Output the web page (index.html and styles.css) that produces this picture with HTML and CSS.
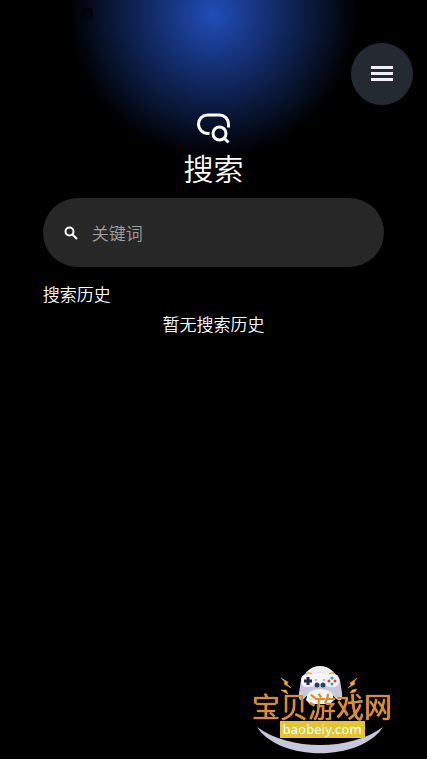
FILE: index.html
```html
<!DOCTYPE html>
<html lang="zh-CN">
<head>
  <meta charset="UTF-8" />
  <meta name="viewport" content="width=device-width, initial-scale=1.0" />
  <title>搜索</title>
  <link rel="stylesheet" href="styles.css">
</head>
<body>
<span class="lang-badge" aria-hidden="true">A</span>

<button class="menu-button" type="button" aria-label="菜单">
  <svg viewBox="0 0 24 16" width="24" height="16">
    <path d="M1 1.500h22M1 7.500h22M1 13.500h22" stroke="#f3ecfb" stroke-width="3" fill="none" />
  </svg>
</button>

<main class="container">
  <header class="heading">
    <svg class="heading-icon" viewBox="0 0 36 32" width="36" height="32" aria-hidden="true">
      <path d="M13.500 21.500h-1.500A9.500 9.500 0 0 1 2.500 12A9 9 0 0 1 11.500 3h12A9 9 0 0 1 32.500 12v3.500" />
      <circle cx="23.500" cy="21.500" r="6.500" />
      <path d="M28 26l4.500 4.500" />
    </svg>
    <h1>搜索</h1>
  </header>

  <form class="search" role="search">
    <label for="keyword" aria-label="关键词">
      <svg viewBox="0 0 14 14" width="14" height="14">
        <circle cx="5.500" cy="5.500" r="4" />
        <path d="M8.500 8.500l4.500 4.500" />
      </svg>
    </label>
    <input id="keyword" type="text" placeholder="关键词" autocomplete="off" />
  </form>

  <section class="history">
    <h2>搜索历史</h2>
    <p>暂无搜索历史</p>
  </section>
</main>

<a class="site-logo" href="#">
  <svg class="logo-art" viewBox="0 0 140 92" aria-hidden="true">
    <!-- swoosh -->
    <path d="M5 61C38 85 98 85 131 61C108 96 28 96 5 61Z" fill="#c6c9dc" />
    <!-- controller -->
    <circle cx="68" cy="18" r="18" fill="#efeff1" />
    <path d="M56 8Q68 5 80 8Q86 7 88 14L90 27Q91 36 86 34Q82 32 79 26Q68 20 57 26Q54 32 50 34Q46 35 47 27L49 14Q50 7 56 8Z" fill="#c6c7d8" />
    <path d="M56 8Q68 5 80 8Q87 7 87 15Q87 21 80 21Q68 18 56 21Q49 21 49 15Q49 8 56 8Z" fill="#f6f6f8" />
    <path d="M54 34Q56 24 68 24Q80 24 82 34L78 38H58Z" fill="#f3f3f4" />
    <path d="M54 8q3-2 6 0M77 8q3-2 6 0" stroke="#dfad4d" stroke-width="1.500" fill="none" />
    <path d="M56 11v8M52 15h8" stroke="#182f48" stroke-width="3" />
    <circle cx="65" cy="19" r="2.500" fill="#24435a" />
    <circle cx="71" cy="19" r="2.500" fill="#24435a" />
    <path d="M63 14h2M71 14h2" stroke="#d55464" />
    <circle cx="80" cy="12" r="1.500" fill="#359eb9" />
    <circle cx="80" cy="18" r="1.500" fill="#359eb9" />
    <circle cx="77" cy="15" r="1.500" fill="#dc3f4e" />
    <circle cx="83" cy="15" r="1.500" fill="#dc3f4e" />
    <!-- sparks -->
    <path d="M29 12L36 16L35 18L39 22L32 18L33 16ZM29 24L34 24L36 28L32 26ZM105 12L98 17L99 19L96 22L103 18L102 16ZM105 23L100 24L98 27L103 26Z" fill="#f1ae28" stroke="#f1ae28" stroke-width="0.500" />
  </svg>
  <span class="logo-name">宝贝游戏网</span>
  <span class="logo-domain">baobeiy.com</span>
</a>
</body>
</html>
```
FILE: styles.css
```css
body {
  margin: 0;
  min-height: 100vh;
  font-family: "Noto Sans CJK SC", sans-serif;
  color: #fff;
  background: #000 radial-gradient(circle 144px at 50% 14px, #204db8, #000) no-repeat;
}
.lang-badge {
  position: absolute;
  top: 8px;
  left: 82px;
  width: 11px;
  height: 12px;
  font-size: 8px;
  line-height: 12px;
  text-align: center;
  color: #050e28;
  background: #01040c;
}
.menu-button {
  position: fixed;
  top: 43px;
  right: 14px;
  display: flex;
  align-items: center;
  justify-content: center;
  width: 62px;
  height: 62px;
  padding: 0;
  border: none;
  border-radius: 50%;
  background: #242a32;
  cursor: pointer;
}
.container {
  padding: 112px 10% 0;
}
.heading {
  display: flex;
  flex-direction: column;
  align-items: center;
}
.heading-icon {
  fill: none;
  stroke: #fff;
  stroke-width: 3;
}
h1 {
  margin: 2px 0 10px;
  font-size: 30px;
  font-weight: 350;
  line-height: 42px;
}
.search {
  display: flex;
  align-items: center;
  gap: 14px;
  height: 69px;
  padding: 0 21px;
  border-radius: 35px;
  background: #272727;
}
.search label {
  display: flex;
}
.search svg {
  fill: none;
  stroke: #fff;
  stroke-width: 2;
}
.search input {
  flex: 1;
  min-width: 0;
  padding: 0;
  border: none;
  outline: none;
  font-family: inherit;
  font-size: 17px;
  font-weight: 350;
  color: #fff;
  background: none;
}
.search input::placeholder {
  color: #a0a0a0;
}
.history {
  padding-top: 12px;
}
.history h2,
.history p {
  margin: 0;
  font-size: 17px;
  font-weight: 350;
  line-height: 30px;
}
.history p {
  text-align: center;
}
.site-logo {
  position: fixed;
  right: 35px;
  bottom: 1px;
  display: flex;
  flex-direction: column;
  align-items: center;
  width: 140px;
  height: 92px;
  color: inherit;
  text-decoration: none;
}
.logo-art {
  position: absolute;
  inset: 0;
}
.logo-name {
  position: relative;
  margin-top: 25px;
  font-size: 28px;
  font-weight: 400;
  line-height: 30px;
  white-space: nowrap;
  color: #e38b23;
  text-shadow: 0 0 1px #f8d9a0;
}
.logo-domain {
  position: relative;
  padding: 0 3px;
  font-family: "Noto Sans", sans-serif;
  font-size: 13px;
  font-weight: 500;
  line-height: 17px;
  color: #fff;
  background: #e5c52f;
}
```
